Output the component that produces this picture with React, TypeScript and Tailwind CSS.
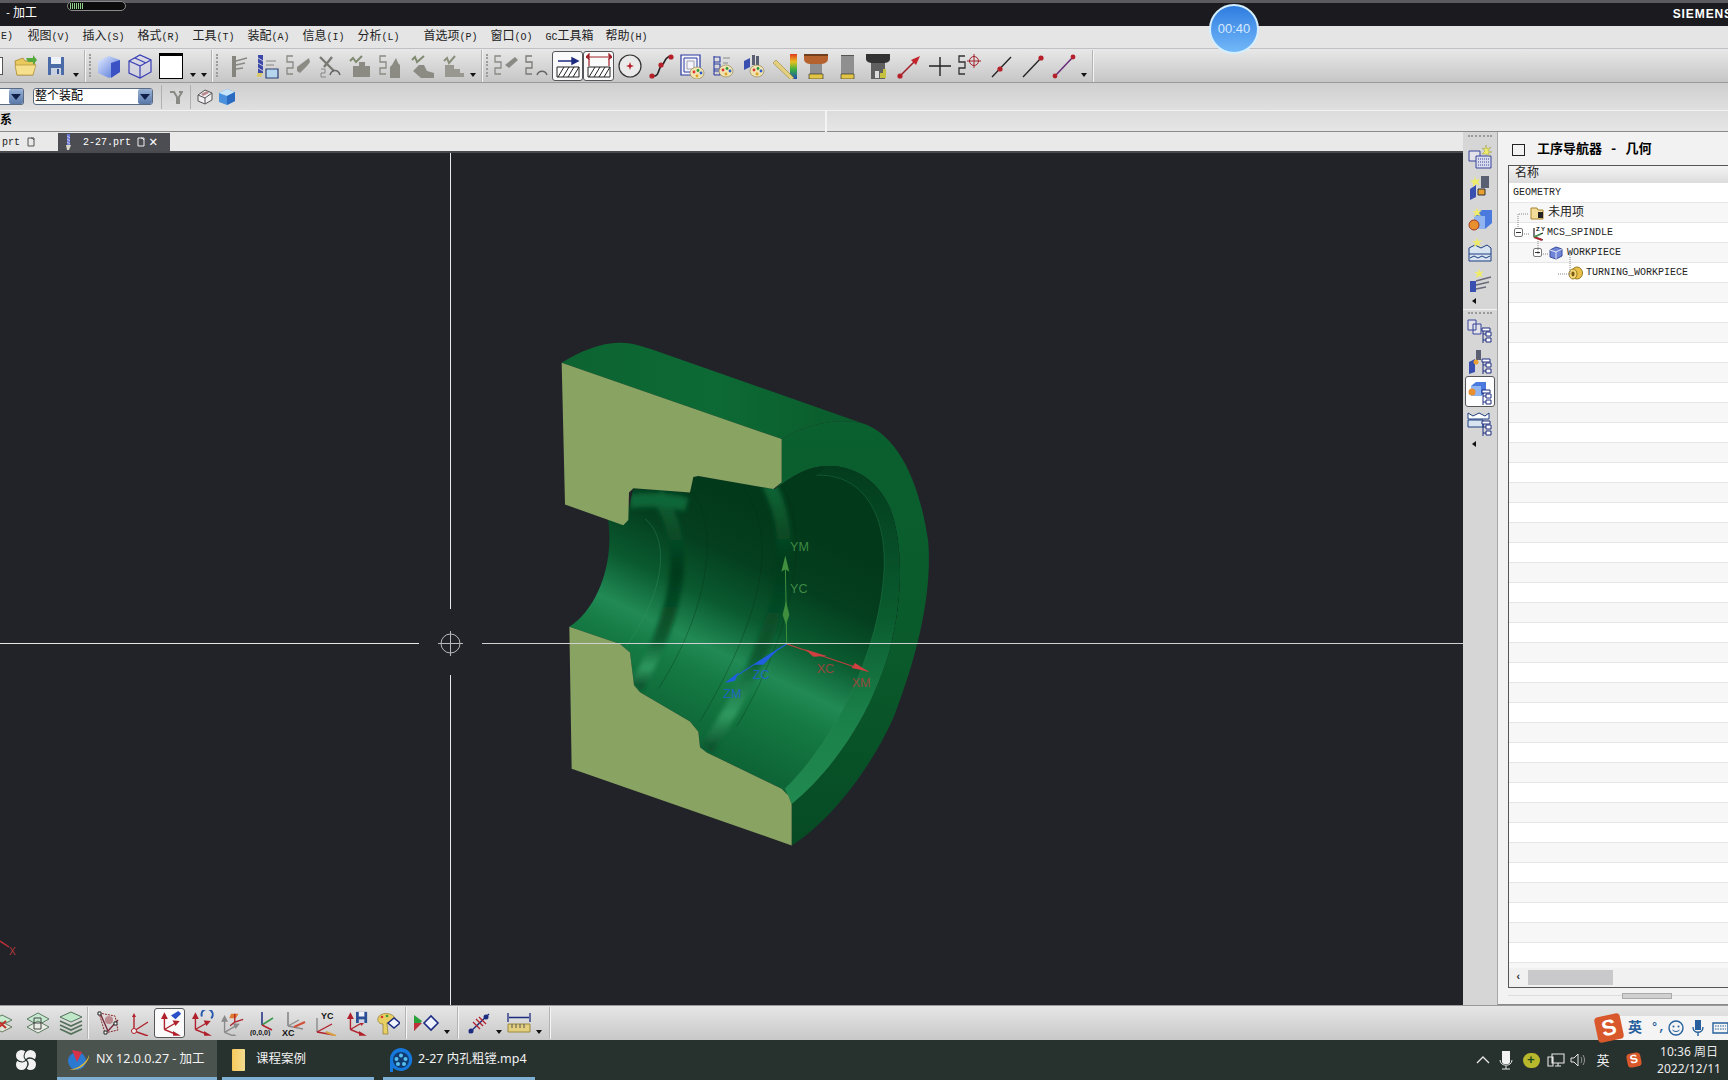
import type { ReactNode } from "react";

const Ic = ({ children, w = 26, h = 26 }: { children: ReactNode; w?: number; h?: number }) => (
  <svg width={w} height={h} viewBox={`0 0 ${w} ${h}`} fill="none">
    {children}
  </svg>
);

const Slot = ({ children, boxed = false }: { children?: ReactNode; boxed?: boolean }) => (
  <div
    className={
      boxed
        ? "flex h-[30px] w-[31px] shrink-0 items-center justify-center rounded-[3px] border border-[#55565a] bg-[#fafafa]"
        : "flex h-[30px] w-[31px] shrink-0 items-center justify-center"
    }
  >
    {children}
  </div>
);

const Drop = ({ w = "w-[10px]" }: { w?: string }) => (
  <div className={`flex h-[30px] ${w} shrink-0 items-end justify-center pb-[4px]`}>
    <div className="h-0 w-0 border-x-[3px] border-t-[4px] border-x-transparent border-t-[#111]" />
  </div>
);

const Sep = () => <div className="mx-[3px] h-[32px] w-[2px] shrink-0 border-l border-r border-l-[#b4b4b4] border-r-[#f4f4f4]" />;

const Handle = () => (
  <div className="flex h-[28px] w-[4px] shrink-0 flex-col justify-between py-[2px]">
    {[0, 1, 2, 3, 4, 5, 6].map((i) => (
      <div key={i} className="h-[2px] w-[2px] bg-[#9c9c9c]" />
    ))}
  </div>
);

const Bracket = ({ c = "#777", x = 2, y = 3 }: { c?: string; x?: number; y?: number }) => (
  <path d={`M${x + 6} ${y}H${x}V${y + 6}H${x + 6}V${y + 12}H${x}V${y + 18}H${x + 6}`} stroke={c} strokeWidth="1.3" />
);

const Triad = ({ c = "#b0212c", dim = false }: { c?: string; dim?: boolean }) => (
  <g stroke={dim ? "#8a8a8a" : c} strokeWidth="1.5">
    <path d="M8 21V7" />
    <path d="M8 21L20 14" />
    <path d="M8 21L20 26" />
    <path d="M5.5 9L8 4L10.5 9Z" fill={dim ? "#8a8a8a" : c} />
    <path d="M18 12L23 12.5L20 16Z" fill={c} />
    <path d="M18 24L23 27L18 27Z" fill={c} />
  </g>
);

const Pal = ({ x = 14, y = 14 }: { x?: number; y?: number }) => (
  <g>
    <ellipse cx={x + 6} cy={y + 5} rx="7" ry="6" fill="#efe3b0" stroke="#8a7a4a" strokeWidth="0.6" />
    <circle cx={x + 3} cy={y + 4} r="1.4" fill="#d33" />
    <circle cx={x + 7} cy={y + 2.5} r="1.4" fill="#2a9a3a" />
    <circle cx={x + 10} cy={y + 5} r="1.4" fill="#2a5ad0" />
    <circle cx={x + 6} cy={y + 8} r="1.4" fill="#e0a020" />
  </g>
);

const Gray = ({ d }: { d: string }) => <path d={d} fill="#8b8b84" />;

const Folder = () => (
  <Ic>
    <path d="M3 8L11 5L13 8H21L23 11L21 22H5Z" fill="#e9c95e" stroke="#a8872c" strokeWidth="0.8" />
    <path d="M3 12H24L21 22H5Z" fill="#f6e08e" stroke="#a8872c" strokeWidth="0.6" />
    <path d="M14 5L21 5L21 2L25 7L21 12V9H16Z" fill="#55a83c" />
  </Ic>
);
const Save = () => (
  <Ic>
    <path d="M5 4H21V22H5Z" fill="#4a6aa8" />
    <path d="M8 4H18V11H8Z" fill="#eef1f8" />
    <path d="M8 15H18V22H8Z" fill="#c9d0e0" />
    <path d="M14 16H16V21H14Z" fill="#3a5590" />
  </Ic>
);
const SolidCube = () => (
  <Ic>
    <defs>
      <linearGradient id="sc" x1="0" y1="0" x2="1" y2="1">
        <stop offset="0" stopColor="#e4ecff" />
        <stop offset="1" stopColor="#4a6fd8" />
      </linearGradient>
    </defs>
    <path d="M2 8L13 3L24 7V19L13 25L2 20Z" fill="url(#sc)" />
    <path d="M15 10L24 7V19L15 25Z" fill="#3b52c4" />
  </Ic>
);
const WireCube = () => (
  <Ic>
    <path d="M2 8L13 2L24 7V19L13 25L2 20ZM2 8L13 13V25M13 13L24 7M8 5L19 10" stroke="#3a3fb5" strokeWidth="1.2" fill="#d7d8ee" fillOpacity="0.5" />
  </Ic>
);
const BlankWin = () => (
  <div className="h-[26px] w-[24px] border border-black border-t-[3px] bg-white" />
);

const topIcons: ReactNode[] = [
  <Ic key="a">
    <path d="M9 3H13V24H9Z" fill="#85857e" />
    <path d="M13 8L24 5M13 12L22 10M13 16L20 15" stroke="#8a8a84" strokeWidth="1.6" />
  </Ic>,
  <Ic key="b">
    <path d="M4 2H9V20H4Z" fill="#3d49a8" />
    <path d="M4 5L9 8M4 10L9 13M4 15L9 18" stroke="#c8c8e0" />
    <path d="M3 20H9L7 24H3Z" fill="#d8c86a" />
    <path d="M12 8H22M12 12H20" stroke="#888" strokeWidth="1.2" />
    <path d="M12 16H24V25H12Z" fill="#b6d6ee" stroke="#2c3e70" strokeWidth="1.2" />
  </Ic>,
  <Ic key="c">
    <Bracket c="#8a8a84" />
    <Gray d="M12 14L20 8L24 5L25 9L22 13L15 20L12 18Z" />
  </Ic>,
  <Ic key="d">
    <path d="M4 4L18 18M16 4L8 14" stroke="#7a7a74" strokeWidth="2.4" />
    <path d="M5 16H9V20H5V24H10" stroke="#888" strokeWidth="1" />
    <path d="M14 22C16 16 22 16 24 22" stroke="#666" strokeWidth="1.5" />
  </Ic>,
  <Ic key="e">
    <path d="M3 8L6 5L9 9L15 3" stroke="#7f8a70" strokeWidth="2" />
    <Gray d="M6 13H12V9H18V13H23V24H6Z" />
  </Ic>,
  <Ic key="f">
    <Bracket c="#8a8a84" />
    <Gray d="M14 12L18 5L20 10L22 12V25H12V14Z" />
  </Ic>,
  <Ic key="g">
    <path d="M3 7L6 4L8 9L15 3" stroke="#7f8a70" strokeWidth="2" />
    <Gray d="M10 12H15L18 18L25 20V25H12L4 18Z" />
  </Ic>,
  <Ic key="h">
    <path d="M4 8L7 5L9 10L15 3" stroke="#8a907c" strokeWidth="2" />
    <path d="M5 12H14V16H20V20H24V24H5Z" fill="#989890" />
  </Ic>,
];

const rightIcons: ReactNode[] = [
  <Ic key="a">
    <circle cx="13" cy="13" r="11" stroke="#333" strokeWidth="1.2" fill="#eaeaea" />
    <path d="M13 9L14 12L17 13L14 14L13 17L12 14L9 13L12 12Z" fill="#b5202a" />
  </Ic>,
  <Ic key="b">
    <path d="M4 23C12 25 10 14 14 12C18 9 16 4 23 3" stroke="#222" strokeWidth="1.6" />
    <circle cx="4" cy="23" r="2.6" fill="#b5202a" />
    <circle cx="13" cy="12" r="2.6" fill="#b5202a" />
    <circle cx="23" cy="4" r="2.6" fill="#b5202a" />
  </Ic>,
  <Ic key="c">
    <path d="M2 2H21V22H2Z" stroke="#2a3aa0" strokeWidth="1.2" fill="#f3f3f8" />
    <path d="M5 5H18V19H5Z" stroke="#2a3aa0" />
    <path d="M8 8H15V16H8Z" stroke="#a0a0b0" />
    <Pal x={12} y={15} />
  </Ic>,
  <Ic key="d">
    <path d="M4 3V22M4 4H10V9H4M4 11H10V16H4M4 18H10V22H4" stroke="#2a3aa0" strokeWidth="1.1" />
    <path d="M13 5H20M13 10H18" stroke="#8a8a8a" />
    <Pal x={10} y={13} />
  </Ic>,
  <Ic key="e">
    <path d="M3 8L9 5V14L3 17Z" fill="#3a50b0" />
    <path d="M11 2H14V12H11ZM15 3H18V13H15Z" fill="#5a5f72" />
    <Pal x={10} y={13} />
  </Ic>,
  <Ic key="f">
    <defs>
      <linearGradient id="rb" x1="0" y1="0" x2="0" y2="1">
        <stop offset="0" stopColor="#e03a20" />
        <stop offset="0.3" stopColor="#e8c020" />
        <stop offset="0.6" stopColor="#38b040" />
        <stop offset="1" stopColor="#2040c0" />
      </linearGradient>
    </defs>
    <path d="M18 1H25V27H18Z" fill="url(#rb)" />
    <path d="M1 10L4 7L22 25L19 27Z" fill="#e3cf7e" stroke="#9a8a40" strokeWidth="0.6" />
  </Ic>,
  <Ic key="g">
    <path d="M1 1H25V6C25 10 20 11 18 11H8C5 11 1 10 1 6Z" fill="#b5622f" />
    <path d="M1 1H25V3H1Z" fill="#70401f" />
    <path d="M7 11H19V22H7Z" fill="#8f8f8f" />
    <path d="M6 21H20V26H6Z" fill="#e3c545" stroke="#222" strokeWidth="0.6" />
  </Ic>,
  <Ic key="h">
    <path d="M7 2H20V21H7Z" fill="#8f8f8f" />
    <path d="M7 2H20V3H7Z" fill="#555" />
    <path d="M7 21H20V26H7Z" fill="#e3c545" stroke="#222" strokeWidth="0.6" />
  </Ic>,
  <Ic key="i">
    <path d="M1 1H25V6C25 9 21 10 19 10H7C5 10 1 9 1 6Z" fill="#333" />
    <path d="M6 10H20V26H6Z" fill="#5f5f5f" />
    <path d="M10 18H14V25H10Z" fill="#ddd" />
    <path d="M15 20H18V25H15ZM18 16H21V25H18Z" fill="#c6c040" />
  </Ic>,
  <Ic key="j">
    <path d="M4 23L20 7" stroke="#a0222a" strokeWidth="1.6" />
    <circle cx="4" cy="23" r="2.6" fill="#b5202a" />
    <path d="M15 7L24 3L20 12Z" fill="#c4232c" />
  </Ic>,
  <Ic key="k">
    <path d="M13 4V23M2 13H24" stroke="#222" strokeWidth="1.4" />
  </Ic>,
  <Ic key="l">
    <Bracket c="#333" x={1} />
    <circle cx="16" cy="8" r="4.5" stroke="#a0222a" />
    <path d="M16 1V15M9 8H23" stroke="#a0222a" />
  </Ic>,
  <Ic key="m">
    <path d="M3 24L22 4" stroke="#222" strokeWidth="1.3" />
    <circle cx="11" cy="16" r="2.6" fill="#b5202a" />
  </Ic>,
  <Ic key="n">
    <path d="M3 24L22 4" stroke="#222" strokeWidth="1.3" />
    <circle cx="21" cy="5" r="2.6" fill="#b5202a" />
  </Ic>,
  <Ic key="o">
    <path d="M4 23L22 4" stroke="#6a2a7a" strokeWidth="1.5" />
    <circle cx="4" cy="23" r="2.4" fill="#b5202a" />
    <circle cx="22" cy="4" r="2.4" fill="#b5202a" />
  </Ic>,
];

const Hatch = ({ twin = false }: { twin?: boolean }) => (
  <Ic>
    {twin ? (
      <g stroke="#a0222a" strokeWidth="1.2">
        <path d="M3 4H22M3 6V13M23 6V13" />
        <path d="M3 1L0 4L3 6ZM23 1L26 4L23 6Z" fill="#a0222a" />
      </g>
    ) : (
      <path d="M3 8H20M17 5L23 8L17 11Z" stroke="#1d2c80" strokeWidth="1.4" fill="#1d2c80" />
    )}
    <path d="M2 14H24V24H2Z" stroke="#222" fill="#fff" />
    <path d="M3 24L9 14M8 24L14 14M13 24L19 14M18 24L24 14" stroke="#222" />
  </Ic>
);

const layerIcons: { w: string; icon: ReactNode }[] = [
  {
    w: "w-[33px]",
    icon: (
      <Ic>
        <path d="M4 10L13 5L23 10L13 15Z" fill="#c8ecd0" stroke="#5a7a60" />
        <path d="M4 17L13 12L23 17L13 22Z" fill="#dfe5d8" stroke="#6a7a60" />
        <path d="M9 11L17 18M17 11L9 18" stroke="#c0302a" strokeWidth="2" />
      </Ic>
    ),
  },
  {
    w: "w-[40px]",
    icon: (
      <Ic>
        <path d="M2 9L13 3L24 9L13 15Z" fill="#c5e8d0" stroke="#5a7a60" />
        <path d="M2 17L13 11L24 17L13 23Z" fill="#e8ece4" stroke="#5a7a60" />
        <path d="M9 8H16V19H9ZM9 13H16" stroke="#444" />
      </Ic>
    ),
  },
  {
    w: "w-[26px]",
    icon: (
      <Ic>
        <path d="M2 7L13 2L24 7L13 12Z" fill="#bfe7c8" stroke="#54705a" />
        <path d="M2 11L13 16L24 11M2 15L13 20L24 15M2 19L13 24L24 19" stroke="#54705a" strokeWidth="1.6" />
      </Ic>
    ),
  },
];

const wcsIcons: ReactNode[] = [
  <Ic key="a">
    <path d="M4 3L20 6L23 20L10 23Z" stroke="#8a2a2a" strokeDasharray="2 1" />
    <path d="M5 3L13 21L23 10" stroke="#7a2a3a" strokeWidth="1.4" />
    <circle cx="14" cy="10" r="4" fill="#a03a44" fillOpacity="0.5" />
    <path d="M3 2H6V5H3ZM19 12H22V15H19ZM9 21H12V24H9Z" stroke="#222" fill="#fff" />
  </Ic>,
  <Ic key="b">
    <path d="M8 21V5M8 21L22 12M8 21L22 26" stroke="#b0212c" strokeWidth="1.4" />
    <path d="M6 7L8 3L10 7Z" fill="#b0212c" />
    <circle cx="8" cy="21" r="2.5" stroke="#b0212c" fill="#eee" />
  </Ic>,
  <Ic key="c">
    <svg viewBox="0 0 28 28" width="26" height="26">
      <Triad />
      <path d="M15 6L23 1L26 4L20 10Z" fill="#2a50c8" />
    </svg>
  </Ic>,
  <Ic key="d">
    <svg viewBox="0 0 28 28" width="26" height="26">
      <Triad />
      <path d="M15 7A6 6 0 1 1 25 9" stroke="#2a5ab0" strokeWidth="2.2" fill="none" />
    </svg>
  </Ic>,
  <Ic key="e">
    <svg viewBox="0 0 28 28" width="26" height="26">
      <g transform="translate(-2 3)">
        <Triad dim c="#8a8a8a" />
      </g>
      <path d="M13 4H21L18 9H11Z" fill="#e07a30" />
      <path d="M17 13V4M17 13L26 10M17 13L12 17" stroke="#b0212c" strokeWidth="1.4" />
    </svg>
  </Ic>,
  <Ic key="f">
    <path d="M12 15V2" stroke="#1d2c80" strokeWidth="1.5" />
    <path d="M12 15L23 8" stroke="#3a9a4a" strokeWidth="1.5" />
    <path d="M12 15L22 20" stroke="#b0212c" strokeWidth="1.5" />
    <text x="0" y="25" fontSize="7" fontWeight="700" fill="#111" fontFamily="Liberation Sans, sans-serif">(0,0,0)</text>
  </Ic>,
  <Ic key="g">
    <path d="M7 16V2" stroke="#7a7a7a" strokeWidth="1.4" />
    <path d="M7 16L18 10M7 16L22 19" stroke="#8a8a8a" strokeWidth="1.4" />
    <path d="M13 17L24 12" stroke="#d0503a" strokeWidth="2" />
    <text x="1" y="26" fontSize="9" fontWeight="700" fill="#111" fontFamily="Liberation Sans, sans-serif">XC</text>
  </Ic>,
  <Ic key="h">
    <path d="M5 22V8" stroke="#8a8a8a" strokeWidth="1.4" />
    <path d="M5 22L20 14M5 22L22 25" stroke="#b0212c" strokeWidth="1.4" />
    <path d="M14 22L24 26" stroke="#d8a040" strokeWidth="2" />
    <text x="9" y="9" fontSize="9" fontWeight="700" fill="#111" fontFamily="Liberation Sans, sans-serif">YC</text>
  </Ic>,
  <Ic key="i">
    <svg viewBox="0 0 28 28" width="26" height="26">
      <Triad />
      <path d="M14 2H26V14H14Z" fill="#2c4f96" />
      <path d="M17 2H23V7H17Z" fill="#eef1f8" />
      <path d="M17 10H23V14H17Z" fill="#cdd3e2" />
    </svg>
  </Ic>,
  <Ic key="j">
    <path d="M4 8C6 2 18 2 21 8C22 12 14 14 13 13L14 24H9L9 14C6 14 3 12 4 8Z" fill="#e8cf62" stroke="#8a7a30" strokeWidth="0.7" />
    <circle cx="8" cy="7" r="1.3" fill="#d33" />
    <circle cx="13" cy="6" r="1.3" fill="#3a9a3a" />
    <path d="M14 13L20 8L26 13L20 18Z" fill="#f0f4ff" stroke="#1d2c80" strokeWidth="1.6" />
  </Ic>,
];

const stripIcons: ReactNode[] = [
  <Ic key="a">
    <path d="M2 8H13V18H2Z" fill="#e2e2e8" stroke="#39459a" />
    <path d="M9 13H24V25H9Z" fill="#d8dced" stroke="#39459a" />
    <path d="M11 16H22M11 19H22M11 22H22" stroke="#39459a" strokeDasharray="1 1" />
    <path d="M19 2L20 6L24 4L21 8L25 9L21 10L23 13L19 11L15 11L18 8L15 5L18 6Z" fill="#eeea6a" stroke="#8a8a30" strokeWidth="0.4" />
  </Ic>,
  <Ic key="b">
    <path d="M3 15L9 11V23L3 26Z" fill="#3a50b0" />
    <path d="M14 2H22V14H14Z" fill="#5a5f72" />
    <path d="M11 15H18V21H11Z" fill="#e8a030" stroke="#333" />
    <path d="M8 2L9 6L13 5L11 8L13 11L9 10L6 13L6 9L3 7L7 6Z" fill="#eeea6a" />
  </Ic>,
  <Ic key="c">
    <path d="M7 11L14 5H25V18L18 24H7Z" fill="#4a7ade" />
    <path d="M7 11H18V24H7Z" fill="#8fb4f0" />
    <circle cx="7" cy="20" r="5" fill="#e89030" stroke="#a03a20" />
    <path d="M10 2L11 6L15 5L12 8L14 11L10 10L7 12L8 8L5 6L9 6Z" fill="#eeea6a" />
  </Ic>,
  <Ic key="d">
    <path d="M2 12L8 9L14 12L20 9L24 12V25H2Z" fill="#d8e4f0" stroke="#1d3c80" />
    <path d="M2 18H24M3 22L7 20L11 22L15 20L19 22L23 20" stroke="#1d3c80" />
    <path d="M10 1L11 5L15 4L12 7L14 10L10 9L7 11L8 7L5 5L9 5Z" fill="#eeea6a" />
  </Ic>,
  <Ic key="e">
    <path d="M3 14H9V25H3Z" fill="#3a50b0" />
    <path d="M9 14L24 10M9 18L22 15M9 22L19 20" stroke="#6a6a7a" strokeWidth="1.6" />
    <path d="M12 1L13 5L17 4L14 7L16 10L12 9L9 11L10 7L7 5L11 5Z" fill="#eeea6a" />
  </Ic>,
];

const Tree = ({ x = 15 }: { x?: number }) => (
  <path d={`M${x} 11H${x + 8}V14H${x}ZM${x + 1} 14V26M${x + 1} 17H${x + 4}M${x + 1} 23H${x + 4}M${x + 4} 15H${x + 9}V19H${x + 4}ZM${x + 4} 21H${x + 9}V25H${x + 4}Z`} stroke="#1d2c80" fill="#fff" strokeWidth="1" />
);

const stripIcons2: ReactNode[] = [
  <Ic key="a">
    <path d="M1 3H9V13H1ZM6 7H14V17H6Z" fill="#e2e2e8" stroke="#39459a" />
    <Tree />
  </Ic>,
  <Ic key="b">
    <path d="M2 14L8 11V24L2 26Z" fill="#3a50b0" />
    <path d="M9 2H14V12H9Z" fill="#5a5f72" />
    <circle cx="9" cy="14" r="2.5" fill="#e8a030" />
    <Tree />
  </Ic>,
  <Ic key="c">
    <path d="M4 7L9 3H19V13L14 17H4Z" fill="#4a7ade" />
    <path d="M4 7H14V17H4Z" fill="#8fb4f0" />
    <circle cx="5" cy="13" r="3.5" fill="#e89030" />
    <Tree />
  </Ic>,
  <Ic key="d">
    <path d="M1 3L6 6L12 3L18 6L22 3V9H1Z" fill="#fff" stroke="#1d3c80" />
    <path d="M1 10H16V17H1Z" fill="#d8e4f0" stroke="#1d3c80" />
    <Tree />
  </Ic>,
];

const rows = [
  { kind: "geo" },
  { kind: "unused" },
  { kind: "mcs" },
  { kind: "work" },
  { kind: "turn" },
];

const Expander = () => (
  <div className="flex h-[9px] w-[9px] shrink-0 items-center justify-center rounded-[2px] border border-[#777] bg-white">
    <div className="h-px w-[5px] bg-[#333]" />
  </div>
);

const Model = () => (
  <svg
    className="absolute left-[530px] top-[169px]"
    width="420"
    height="540"
    viewBox="0 0 1260 1568"
    preserveAspectRatio="none"
  >
    <defs>
      <linearGradient id="cav" gradientUnits="userSpaceOnUse" x1="600" y1="500" x2="300" y2="1150">
        <stop offset="0" stopColor="#02391a" />
        <stop offset="0.22" stopColor="#043f1f" />
        <stop offset="0.42" stopColor="#0a5a2f" />
        <stop offset="0.6" stopColor="#218a55" />
        <stop offset="0.72" stopColor="#157a43" />
        <stop offset="1" stopColor="#0d6335" />
      </linearGradient>
      <linearGradient id="ring" x1="0" y1="0" x2="0" y2="1">
        <stop offset="0" stopColor="#0b602f" />
        <stop offset="0.55" stopColor="#0a5a2b" />
        <stop offset="1" stopColor="#064a24" />
      </linearGradient>
      <linearGradient id="cham" gradientUnits="userSpaceOnUse" x1="0" y1="430" x2="0" y2="1380">
        <stop offset="0" stopColor="#033d1d" />
        <stop offset="0.45" stopColor="#0a5c2f" />
        <stop offset="0.75" stopColor="#1a8049" />
        <stop offset="1" stopColor="#20894f" />
      </linearGradient>
      <linearGradient id="band" x1="0" y1="0" x2="1" y2="0">
        <stop offset="0" stopColor="#0c6331" />
        <stop offset="0.5" stopColor="#0d6a34" />
        <stop offset="1" stopColor="#0a5a2b" />
      </linearGradient>
      <linearGradient id="f1" gradientUnits="userSpaceOnUse" x1="0" y1="500" x2="0" y2="1060">
        <stop offset="0" stopColor="#0c5f33" />
        <stop offset="0.4" stopColor="#033a1b" />
        <stop offset="0.75" stopColor="#0a5a30" />
        <stop offset="0.9" stopColor="#2f9a60" />
        <stop offset="1" stopColor="#0a4f2a" />
      </linearGradient>
      <linearGradient id="f2" gradientUnits="userSpaceOnUse" x1="0" y1="470" x2="0" y2="1240">
        <stop offset="0" stopColor="#0f6636" />
        <stop offset="0.3" stopColor="#033a1b" />
        <stop offset="0.65" stopColor="#0a5a30" />
        <stop offset="0.87" stopColor="#2f9a60" />
        <stop offset="1" stopColor="#0a4f2a" />
      </linearGradient>
      <filter id="soft">
        <feGaussianBlur stdDeviation="7" />
      </filter>
      <clipPath id="cavClip">
        <path d="M233 565L297 540L310 483L480 495L490 450L505 447L735 485C790 445 830 420 890 418C960 415 1040 450 1080 540C1120 640 1120 800 1080 950C1020 1150 900 1310 785 1400L775 1375L755 1355L530 1250L510 1235L505 1190L480 1160L330 1075L312 1055L300 960L270 935L118 885C190 840 235 740 238 640C239 615 237 590 233 565Z" />
      </clipPath>
    </defs>
    <path d="M95 118C150 85 215 58 275 60C300 60 330 68 360 78L1010 298C930 275 830 295 755 340Z" fill="url(#band)" />
    <path d="M755 340C830 295 930 275 1010 298C1110 340 1170 470 1195 640C1205 780 1170 950 1090 1150C1020 1300 900 1450 785 1520L785 1400C900 1310 1020 1150 1080 950C1120 800 1120 640 1080 540C1040 450 960 415 890 418C830 420 790 445 735 485L755 465Z" fill="url(#ring)" />
    <path d="M233 565L297 540L310 483L480 495L490 450L505 447L735 485C790 445 830 420 890 418C960 415 1040 450 1080 540C1120 640 1120 800 1080 950C1020 1150 900 1310 785 1400L775 1375L755 1355L530 1250L510 1235L505 1190L480 1160L330 1075L312 1055L300 960L270 935L118 885C190 840 235 740 238 640C239 615 237 590 233 565Z" fill="url(#cav)" />
    <g clipPath="url(#cavClip)">
      <path d="M860 445C1000 440 1070 560 1062 720C1050 950 920 1210 765 1355L785 1400C900 1310 1020 1150 1080 950C1120 800 1120 640 1080 540C1040 450 960 415 890 418Z" fill="url(#cham)" />
      <g filter="url(#soft)">
        <path d="M380 500C470 620 470 800 320 1060" stroke="url(#f1)" strokeWidth="42" fill="none" />
        <path d="M715 470C800 620 790 860 530 1240" stroke="url(#f2)" strokeWidth="42" fill="none" />
        <path d="M300 520C350 515 420 515 470 530" stroke="#116638" strokeWidth="40" fill="none" />
      </g>
      <g fill="none" strokeWidth="1">
        <path d="M345 572C410 620 420 760 290 940" stroke="#3f9a66" />
        <path d="M480 490C560 560 560 800 385 1065" stroke="#0a2f18" />
        <path d="M640 480C730 600 730 800 510 1160" stroke="#0a2f18" />
        <path d="M748 470C830 560 830 830 620 1175" stroke="#0a2f18" />
        <path d="M860 445C1000 440 1070 560 1062 720C1050 950 920 1210 765 1355" stroke="#2f8a58" />
      </g>
    </g>
    <path d="M95 118L755 340V465L730 485L505 447L490 450L480 495L310 483L297 495L295 575L280 590L105 530Z" fill="#89a363" />
    <path d="M118 885L270 935L300 960L312 1055L330 1075L480 1160L505 1190L510 1235L530 1250L755 1355L775 1375L785 1400V1520L125 1297Z" fill="#89a363" />
    <g strokeWidth="3" fill="none">
      <path d="M770 935L766 700" stroke="#3f8f3f" />
      <path d="M770 935L1015 1015" stroke="#c24040" />
      <path d="M770 935L590 1045" stroke="#1f5fe0" />
    </g>
    <path d="M766 678L778 725L766 718L754 725Z" fill="#3f8f3f" />
    <path d="M768 810L778 850L768 880L758 850Z" fill="#3f8f3f" />
    <path d="M1015 1015L965 1005L975 990Z" fill="#d04040" />
    <path d="M825 950L890 970L850 972Z" fill="#d04040" />
    <path d="M585 1048L625 1018L615 1042Z" fill="#1f5fe0" />
    <path d="M670 995L750 945L700 995Z" fill="#1f5fe0" />
    <g fontFamily="Liberation Sans, sans-serif" fontSize="38" fillOpacity="0.8">
      <text x="780" y="665" fill="#4f9f4f">YM</text>
      <text x="780" y="788" fill="#4f9f4f">YC</text>
      <text x="860" y="1020" fill="#b83c3c">XC</text>
      <text x="965" y="1060" fill="#b83c3c">XM</text>
      <text x="668" y="1038" fill="#1f5fe0">ZC</text>
      <text x="580" y="1092" fill="#1f5fe0">ZM</text>
    </g>
  </svg>
);

const Menu = ({ label, k, w }: { label: string; k: string; w: string }) => (
  <div className={`${w} shrink-0 whitespace-nowrap text-[12px] text-[#222]`}>
    {label}
    <span className="text-[10px]">({k})</span>
  </div>
);

const TaskItem = ({ icon, text, active = false }: { icon: ReactNode; text: string; active?: boolean }) => (
  <div
    className={
      active
        ? "flex h-[40px] w-[160px] shrink-0 items-center gap-[5px] border-b-[3px] border-[#7fb0d4] bg-[#4b534f] pl-[8px] pt-[2px]"
        : "flex h-[40px] w-[152px] shrink-0 items-center gap-[4px] border-b-[3px] border-[#7fb0d4] pl-[5px] pt-[2px]"
    }
  >
    {icon}
    <span className="whitespace-nowrap font-['Noto_Sans','Noto_Sans_CJK_SC',sans-serif] text-[12.5px] text-[#f2f2f2]">{text}</span>
  </div>
);

const SogouS = ({ size = 26 }: { size?: number }) => (
  <div
    style={{ width: size, height: size }}
    className="flex -rotate-12 items-center justify-center rounded-[4px] bg-[#d9582b] font-['Liberation_Sans',sans-serif] font-bold text-white"
  >
    <span style={{ fontSize: size * 0.85, lineHeight: 1 }}>S</span>
  </div>
);

export default function App() {
  return (
    <div className="relative flex h-[1080px] w-[1728px] flex-col overflow-hidden bg-[#e4e4e4] font-['Liberation_Mono','Noto_Sans_CJK_SC',monospace]">
      {/* Title bar */}
      <div className="h-[3px] shrink-0 bg-[#5c5c60]" />
      <div className="flex h-[23px] shrink-0 items-start bg-[#1b1b1f] pl-[5px] text-white">
        <span className="w-[8px] pt-[2px] text-[10px] leading-[18px]">-</span>
        <span className="pt-[2px] text-[12px] leading-[18px]">加工</span>
        <div className="-mt-[2px] ml-[30px] flex h-[10px] w-[59px] items-center gap-px rounded-[5px] border border-[#8a8a8a] bg-[#0c0c0c] pl-[2px]">
          {[0, 1, 2, 3, 4, 5, 6].map((i) => (
            <div key={i} className="h-[6px] w-px bg-[#8fd08a]" />
          ))}
        </div>
        <span className="ml-auto mr-[-5px] pt-[4px] font-['Liberation_Sans',sans-serif] text-[12px] font-bold leading-[14px] tracking-[0.9px]">
          SIEMENS
        </span>
      </div>

      {/* Menu */}
      <div className="flex h-[22px] shrink-0 items-center bg-[#e5e5e5] leading-[22px]">
        <div className="-ml-[5px] w-[32.5px] shrink-0 text-[10px] text-[#222]">(E)</div>
        <Menu label="视图" k="V" w="w-[55px]" />
        <Menu label="插入" k="S" w="w-[55px]" />
        <Menu label="格式" k="R" w="w-[55px]" />
        <Menu label="工具" k="T" w="w-[55px]" />
        <Menu label="装配" k="A" w="w-[55px]" />
        <Menu label="信息" k="I" w="w-[55px]" />
        <Menu label="分析" k="L" w="w-[66px]" />
        <Menu label="首选项" k="P" w="w-[67px]" />
        <Menu label="窗口" k="O" w="w-[55px]" />
        <div className="w-[60px] shrink-0 text-[12px] text-[#222]">
          <span className="text-[10px]">GC</span>工具箱
        </div>
        <Menu label="帮助" k="H" w="w-[55px]" />
      </div>

      {/* Main toolbar */}
      <div className="flex h-[35px] shrink-0 items-center border-t border-t-[#c0c0c4] border-b border-b-[#9a9a9a] bg-gradient-to-b from-[#e8e8e8] to-[#c6c6c6]">
        <div className="mr-[6px] h-[18px] w-[3px] shrink-0 border-y border-r border-[#555] bg-white" />
        <Slot><Folder /></Slot>
        <Slot><Save /></Slot>
        <Drop />
        <Sep />
        <Handle />
        <Slot><SolidCube /></Slot>
        <Slot><WireCube /></Slot>
        <Slot><BlankWin /></Slot>
        <Drop w="w-[13px]" />
        <Drop w="w-[9px]" />
        <Sep />
        <Handle />
        {topIcons.map((icon, i) => (
          <Slot key={i}>{icon}</Slot>
        ))}
        <Drop />
        <Sep />
        <Handle />
        <Slot><Ic><Bracket c="#8a8a84" /><path d="M12 12L22 4L25 7L16 15Z" fill="#8a8a84" /></Ic></Slot>
        <Slot><Ic><Bracket c="#7a7a74" /><path d="M13 22C15 17 21 17 23 22" stroke="#666" strokeWidth="1.5" /></Ic></Slot>
        <Slot boxed><Hatch /></Slot>
        <Slot boxed><Hatch twin /></Slot>
        {rightIcons.map((icon, i) => (
          <Slot key={i}>{icon}</Slot>
        ))}
        <Drop />
        <Sep />
      </div>

      {/* Selection bar */}
      <div className="flex h-[28px] shrink-0 items-center border-b border-b-[#f2f2f2] bg-gradient-to-b from-[#cfcfcf] to-[#e0e0e0]">
        <div className="flex h-[17px] w-[24px] shrink-0 items-center justify-end rounded-r-[3px] border border-l-0 border-[#5a6a80] bg-white">
          <ComboArrow />
        </div>
        <div className="ml-[9px] flex h-[17px] w-[120px] shrink-0 items-center justify-between rounded-[3px] border border-[#5a6a80] bg-white pl-px">
          <span className="text-[12px] leading-none text-black">整个装配</span>
          <ComboArrow />
        </div>
        <div className="ml-[8px] h-[24px] w-px bg-[#b0b0b0]" />
        <div className="ml-[7px] flex w-[14px] justify-center">
          <Ic w={14} h={16}>
            <path d="M1 3H5L8 8V14H10V8L13 3H10" stroke="#8a8a84" strokeWidth="2" />
          </Ic>
        </div>
        <div className="ml-[7px] h-[24px] w-px bg-[#b0b0b0]" />
        <div className="ml-[5px] flex items-center gap-[4px]">
          <Ic w={18} h={18}>
            <path d="M2 7L9 2L16 5V12L9 16L2 13Z" fill="#f0eef0" stroke="#555" />
            <path d="M2 7L9 10L16 5M9 10V16" stroke="#555" />
            <path d="M5 6L11 3L13 5L7 8Z" fill="#b88a90" />
          </Ic>
          <Ic w={18} h={18}>
            <path d="M1 5L9 1L17 4V13L9 17L1 14Z" fill="#4a90dc" />
            <path d="M1 5L9 8L17 4L9 1Z" fill="#c8e4f8" />
            <path d="M9 8V17L17 13V4Z" fill="#2a6ac0" />
          </Ic>
        </div>
      </div>

      {/* Status hint */}
      <div className="flex h-[21px] shrink-0 items-center border-b border-b-[#8a8a8a] bg-gradient-to-b from-[#dcdcdc] to-[#e6e6e6] text-[12px] text-black">
        <span className="font-bold">系</span>
        <div className="ml-[813px] h-[21px] w-[2px] bg-[#f4f4f4]" />
      </div>

      {/* Work area */}
      <div className="flex min-h-0 flex-1">
        <div className="flex min-w-0 flex-1 flex-col">
          <div className="flex h-[19px] shrink-0 items-center bg-[#e9e9e9] pt-px text-[10px]">
            <div className="flex w-[58px] shrink-0 items-center gap-[7px] pl-[2px] text-[#222]">
              <span>prt</span>
              <FileMark c="#555" />
            </div>
            <div className="flex h-[19px] w-[112px] shrink-0 items-center bg-[#4c4d52] pl-[5px] text-white">
              <Ic w={10} h={18}>
                <path d="M4 1H7V12H4Z" fill="#6a76d8" />
                <path d="M4 3L7 5M4 6L7 8M4 9L7 11" stroke="#dfe2f6" strokeWidth="0.8" />
                <path d="M3 12H8L6 17H4Z" fill="#d8d8c8" />
              </Ic>
              <span className="ml-[10px]">2-27.prt</span>
              <div className="ml-[6px]">
                <FileMark c="#eee" />
              </div>
              <span className="ml-[4px] text-[14px] font-bold leading-none">✕</span>
            </div>
          </div>
          {/* Graphics window */}
          <div className="relative min-h-0 flex-1 overflow-hidden border-t-2 border-t-[#4a4a4e] bg-[#212328]">
            <Model />
            <div className="absolute left-[450px] top-0 h-[456px] w-px bg-[#e8e8e8]" />
            <div className="absolute left-[450px] top-[522px] h-[340px] w-px bg-[#e8e8e8]" />
            <div className="absolute left-0 top-[490px] h-px w-[419px] bg-[#e8e8e8]" />
            <div className="absolute left-[482px] top-[490px] h-px w-[981px] bg-[#d0d0d0]" />
            <svg className="absolute left-[437px] top-[477px]" width="27" height="27" viewBox="0 0 27 27" fill="none">
              <circle cx="13.5" cy="13.5" r="9.5" stroke="#b8b8b8" />
              <path d="M13.5 1V26M1 13.5H26" stroke="#b8b8b8" />
            </svg>
            <svg className="absolute left-0 top-[783px]" width="20" height="24" viewBox="0 0 20 24" fill="none">
              <path d="M0 5L9 11" stroke="#c0303a" strokeWidth="1.5" />
              <text x="9" y="19" fontSize="10" fill="#b83c3c" fontFamily="Liberation Sans, sans-serif">X</text>
            </svg>
          </div>
        </div>

        {/* Vertical resource bar */}
        <div className="flex w-[35px] shrink-0 flex-col items-center border-r border-r-[#a8a8a8] bg-[#d6d6d6] pt-[3px]">
          <div className="mb-[3px] h-[2px] w-[24px] border-t-2 border-dotted border-t-[#9a9a9a]" />
          {stripIcons.map((icon, i) => (
            <div key={i} className="flex h-[31px] w-full items-center justify-center">{icon}</div>
          ))}
          <div className="ml-[-12px] mt-[3px] h-0 w-0 border-y-[3px] border-r-[4px] border-y-transparent border-r-[#111]" />
          <div className="mt-[5px] h-px w-full bg-[#f2f2f2]" />
          <div className="mt-[2px] h-[2px] w-[24px] border-t-2 border-dotted border-t-[#9a9a9a]" />
          {stripIcons2.map((icon, i) => (
            <div
              key={i}
              className={
                i === 2
                  ? "flex h-[31px] w-[30px] items-center justify-center rounded-[3px] border border-[#55565a] bg-white"
                  : "flex h-[31px] w-full items-center justify-center"
              }
            >
              {icon}
            </div>
          ))}
          <div className="ml-[-12px] mt-[3px] h-0 w-0 border-y-[3px] border-r-[4px] border-y-transparent border-r-[#111]" />
        </div>

        {/* Operation navigator */}
        <div className="flex w-[230px] shrink-0 flex-col border-b border-b-[#8a8a8a] bg-[#f2f2f2]">
          <div className="flex h-[33px] shrink-0 items-center pl-[14px] pt-[2px]">
            <div className="h-[12px] w-[13px] border border-[#222]" />
            <span className="ml-[12px] whitespace-nowrap text-[13px] font-bold text-black">工序导航器 - 几何</span>
          </div>
          <div className="ml-[10px] flex h-[823px] w-[240px] shrink-0 flex-col border border-[#555]">
            <div className="h-[17px] shrink-0 bg-gradient-to-b from-[#f4f4f4] to-[#dcdcdc] pl-[6px] text-[12px] leading-[16px] text-[#222]">
              名称
            </div>
            <div className="relative min-h-0 flex-1 overflow-hidden bg-white text-[10px] text-[#222]">
              {rows.map((r, i) => (
                <div
                  key={i}
                  className={
                    i % 2 === 0
                      ? "flex h-[20px] items-center border-b border-b-[#e6e6e6] bg-white"
                      : "flex h-[20px] items-center border-b border-b-[#e6e6e6] bg-[#f7f7f7]"
                  }
                >
                  {r.kind === "geo" && <span className="ml-[4px]">GEOMETRY</span>}
                  {r.kind === "unused" && (
                    <div className="ml-[20px] flex items-center">
                      <Ic w={16} h={14}>
                        <path d="M2 2H8L9 4H14V13H2Z" fill="#f2dc9a" stroke="#a8842c" />
                        <path d="M9 6H14V12H9Z" fill="#222" />
                      </Ic>
                      <span className="ml-[3px] text-[12px]">未用项</span>
                    </div>
                  )}
                  {r.kind === "mcs" && (
                    <div className="ml-[5px] flex items-center">
                      <Expander />
                      <div className="ml-[7px]">
                        <Ic w={16} h={16}>
                          <path d="M4 3V12M4 12L13 8M4 12L13 15" stroke="#222" strokeWidth="1.2" />
                          <path d="M4 12L12 15" stroke="#b0212c" strokeWidth="2" />
                          <path d="M4 12L11 9" stroke="#3a9a4a" strokeWidth="1.6" />
                          <text x="6" y="6" fontSize="6" fontWeight="700" fill="#111" fontFamily="Liberation Sans, sans-serif">Z</text>
                          <text x="11" y="6" fontSize="6" fontWeight="700" fill="#111" fontFamily="Liberation Sans, sans-serif">Y</text>
                        </Ic>
                      </div>
                      <span className="ml-px">MCS_SPINDLE</span>
                    </div>
                  )}
                  {r.kind === "work" && (
                    <div className="ml-[24px] flex items-center">
                      <Expander />
                      <div className="ml-[7px]">
                        <Ic w={14} h={14}>
                          <path d="M1 4L7 1L13 3V10L7 13L1 11Z" fill="#6f86d8" stroke="#3a4a9a" />
                          <path d="M1 4L7 6L13 3M7 6V13" stroke="#e4e8f8" />
                        </Ic>
                      </div>
                      <span className="ml-[4px]">WORKPIECE</span>
                    </div>
                  )}
                  {r.kind === "turn" && (
                    <div className="ml-[59px] flex items-center">
                      <Ic w={15} h={14}>
                        <ellipse cx="9" cy="7" rx="5.5" ry="6" fill="#e8c04a" stroke="#9a7a20" />
                        <ellipse cx="5" cy="8" rx="4" ry="5" fill="#f2d878" stroke="#9a7a20" />
                        <ellipse cx="5" cy="8" rx="1.6" ry="2.4" fill="#7a5a10" />
                      </Ic>
                      <span className="ml-[3px]">TURNING_WORKPIECE</span>
                    </div>
                  )}
                </div>
              ))}
              <svg className="absolute left-0 top-0" width="80" height="100" viewBox="0 0 80 100" fill="none">
                <path d="M9 46V31H20M29 71V51M49 91H61V71" stroke="#888" strokeDasharray="1 1" />
                <path d="M15 51H20M34 71H39" stroke="#888" strokeDasharray="1 1" />
              </svg>
              {Array.from({ length: 35 }).map((_, i) => (
                <div
                  key={i}
                  className={
                    i % 2 === 0
                      ? "h-[20px] border-b border-b-[#e6e6e6] bg-[#f7f7f7]"
                      : "h-[20px] border-b border-b-[#e6e6e6] bg-white"
                  }
                />
              ))}
            </div>
            <div className="flex h-[19px] shrink-0 items-center bg-[#f1f1f1] pl-[6px]">
              <span className="text-[11px] font-bold leading-none text-[#333]">‹</span>
              <div className="ml-[6px] h-[15px] w-[85px] bg-[#c9c9cc]" />
            </div>
          </div>
          <div className="relative mx-[10px] mt-[5px] h-[6px] w-full">
            <div className="absolute left-0 top-[2px] h-px w-full bg-[#ddd]" />
            <div className="absolute left-[114px] top-0 h-[6px] w-[50px] border border-[#aaa] bg-[#d0d0d0]" />
          </div>
        </div>
      </div>

      {/* Bottom toolbar */}
      <div className="relative flex h-[35px] shrink-0 items-center border-t border-t-[#999] bg-gradient-to-b from-[#e6e6e6] to-[#c8c8c8]">
        <div className="flex w-[84px] shrink-0 items-center">
          <div className="-ml-[15px] flex items-center">
            {layerIcons.map((l, i) => (
              <div key={i} className={`flex ${l.w} shrink-0 justify-center`}>{l.icon}</div>
            ))}
          </div>
        </div>
        <Sep />
        {wcsIcons.map((icon, i) =>
          i === 2 ? (
            <Slot key={i} boxed>{icon}</Slot>
          ) : (
            <Slot key={i}>{icon}</Slot>
          )
        )}
        <Sep />
        <Ic w={30}>
          <path d="M4 5L12 11L4 21Z" fill="#2aa03a" />
          <path d="M4 13L12 13L4 21Z" fill="#c0303a" />
          <path d="M14 13L21 6L28 13L21 20Z" fill="#eef2ff" stroke="#1d2c80" strokeWidth="1.6" />
        </Ic>
        <Drop w="w-[14px]" />
        <Sep />
        <div className="ml-[4px]">
          <Ic>
            <path d="M3 23L23 4" stroke="#1d2c80" strokeWidth="1.4" />
            <path d="M7 12L14 19M10 9L17 16M13 7L20 14" stroke="#b0212c" strokeWidth="1.3" />
            <circle cx="5" cy="21" r="2.5" fill="#1d2c80" />
            <circle cx="20" cy="7" r="2.5" fill="#1d2c80" />
          </Ic>
        </div>
        <Drop w="w-[14px]" />
        <Ic w={26}>
          <path d="M2 3V12M24 3V12M3 7.5H23" stroke="#1d2c80" strokeWidth="1.3" />
          <path d="M2 14H24V22H2Z" fill="#e3cf7e" stroke="#9a8a40" />
          <path d="M6 14V18M10 14V18M14 14V18M18 14V18" stroke="#555" />
        </Ic>
        <Drop w="w-[14px]" />
        <Sep />
        {/* IME bar */}
        <div className="absolute bottom-0 left-[1613px] flex h-[24px] w-[115px] items-center bg-[#f4f4f4] pl-[15px] text-[#27609c]">
          <span className="text-[14px] font-bold leading-none">英</span>
          <span className="ml-[9px] w-[12px] text-[12px] font-bold leading-none">°,</span>
          <div className="ml-[5px] flex items-center gap-[7px]">
            <Ic w={16} h={16}>
              <circle cx="8" cy="8" r="7" stroke="#27609c" strokeWidth="1.4" />
              <circle cx="5.5" cy="6.5" r="1" fill="#27609c" />
              <circle cx="10.5" cy="6.5" r="1" fill="#27609c" />
              <path d="M4.5 10C6 12 10 12 11.5 10" stroke="#27609c" />
            </Ic>
            <Ic w={14} h={18}>
              <path d="M4 1H10V11H4Z" fill="#27609c" />
              <path d="M2 8C2 15 12 15 12 8M7 14V17" stroke="#27609c" strokeWidth="1.4" />
            </Ic>
            <Ic w={16} h={14}>
              <path d="M1 2H16V12H1Z" stroke="#27609c" strokeWidth="1.4" />
              <path d="M3 5H14M3 8H14" stroke="#27609c" strokeDasharray="1.5 1" />
            </Ic>
          </div>
        </div>
        <div className="absolute bottom-[-1px] left-[1596px]">
          <SogouS size={26} />
        </div>
      </div>

      {/* Windows taskbar */}
      <div className="flex h-[40px] shrink-0 items-center bg-[#27312e]">
        <div className="flex w-[57px] shrink-0 justify-center pr-[6px]">
          <Ic w={22} h={22}>
            <circle cx="6.5" cy="6.5" r="5.5" fill="#f2f2f2" />
            <circle cx="15.5" cy="6.5" r="5.5" fill="#f2f2f2" />
            <circle cx="6.5" cy="15.5" r="5.5" fill="#f2f2f2" />
            <circle cx="15.5" cy="15.5" r="5.5" fill="#f2f2f2" />
            <path d="M11 11C8 9 9 5 11 2M11 11C13 8 17 9 20 11M11 11C14 13 13 17 11 20M11 11C9 14 5 13 2 11" stroke="#27312e" strokeWidth="1.2" />
          </Ic>
        </div>
        <TaskItem
          active
          text="NX 12.0.0.27 - 加工"
          icon={
            <Ic w={26} h={26}>
              <circle cx="12" cy="14" r="9" fill="#2c7ad0" />
              <path d="M7 3L17 5L12 15Z" fill="#d8324a" />
              <path d="M3 22C10 24 22 16 24 8C25 14 14 26 3 22Z" fill="#e0b83a" />
            </Ic>
          }
        />
        <div className="w-[5px] shrink-0" />
        <TaskItem
          text="课程案例"
          icon={
            <div className="ml-[5px] mr-[7px] h-[22px] w-[13px] rounded-[1px] bg-gradient-to-r from-[#f6c95a] to-[#f3dc90]" />
          }
        />
        <div className="w-[9px] shrink-0" />
        <TaskItem
          text="2-27 内孔粗镗.mp4"
          icon={
            <Ic w={26} h={26}>
              <path d="M13 1A11.5 11.5 0 1 1 5 21V25H2V13A11 11 0 0 1 13 1Z" fill="#1478dc" />
              <circle cx="13" cy="13" r="8" fill="#103a70" />
              <circle cx="13" cy="8.5" r="2" fill="#55c0ee" />
              <circle cx="17.5" cy="12" r="2" fill="#55c0ee" />
              <circle cx="16" cy="17" r="2" fill="#55c0ee" />
              <circle cx="10" cy="17" r="2" fill="#55c0ee" />
              <circle cx="8.5" cy="12" r="2" fill="#55c0ee" />
            </Ic>
          }
        />
        {/* Tray */}
        <div className="ml-auto flex h-full items-center text-[#f0f0f0]">
          <div className="flex w-[22px] justify-center">
            <Ic w={14} h={10}>
              <path d="M1 8L7 2L13 8" stroke="#e8e8e8" strokeWidth="1.3" />
            </Ic>
          </div>
          <div className="flex w-[24px] justify-center">
            <Ic w={14} h={20}>
              <path d="M3 1H11V12C11 15 3 15 3 12Z" fill="#f2f2f2" />
              <path d="M1 10C1 17 13 17 13 10M7 16V19M3 19H11" stroke="#e8e8e8" />
            </Ic>
          </div>
          <div className="flex w-[26px] justify-center">
            <div className="flex h-[15px] w-[17px] items-center justify-center rounded-full bg-[#b8b82c] text-[13px] font-bold leading-none text-[#1d4a20]">
              +
            </div>
          </div>
          <div className="flex w-[24px] justify-center">
            <Ic w={18} h={16}>
              <path d="M5 2H17V11H5ZM1 5H6V14H1ZM8 14H14M11 11V14" stroke="#e8e8e8" strokeWidth="1.1" />
            </Ic>
          </div>
          <div className="flex w-[22px] justify-center">
            <Ic w={18} h={16}>
              <path d="M1 6H4L8 2V14L4 10H1Z" stroke="#e8e8e8" />
              <path d="M11 5C12 7 12 9 11 11M13 3C15 6 15 10 13 13" stroke="#999" />
            </Ic>
          </div>
          <div className="w-[26px] text-center font-['Noto_Sans_CJK_SC',sans-serif] text-[13px]">英</div>
          <div className="ml-[6px] flex w-[24px] justify-center">
            <SogouS size={14} />
          </div>
          <div className="ml-[7px] flex w-[72px] flex-col items-center font-['Noto_Sans','Noto_Sans_CJK_SC',sans-serif] text-[12px] leading-[17px] text-[#ececec]">
            <span className="whitespace-nowrap">10:36 周日</span>
            <span className="whitespace-nowrap">2022/12/11</span>
          </div>
          <div className="w-[3px]" />
        </div>
      </div>

      {/* Recording timer */}
      <div className="absolute left-[1209px] top-[4px] flex h-[50px] w-[50px] items-center justify-center rounded-full border-2 border-[#d4eeff] bg-gradient-to-b from-[#2f7ce0] to-[#72b8f8] font-['Liberation_Sans',sans-serif] text-[13px] text-[#d6eaff]">
        00:40
      </div>
    </div>
  );
}

function ComboArrow() {
  return (
    <div className="flex h-[15px] w-[14px] items-center justify-center rounded-[2px] bg-gradient-to-b from-[#9ab4d8] to-[#5a78a8]">
      <div className="h-0 w-0 border-x-[5px] border-t-[6px] border-x-transparent border-t-[#10204a]" />
    </div>
  );
}

function FileMark({ c }: { c: string }) {
  return (
    <Ic w={8} h={10}>
      <path d="M1 1H5L7 3V9H1Z" stroke={c} />
      <path d="M4 1H7V3" stroke={c} />
    </Ic>
  );
}
